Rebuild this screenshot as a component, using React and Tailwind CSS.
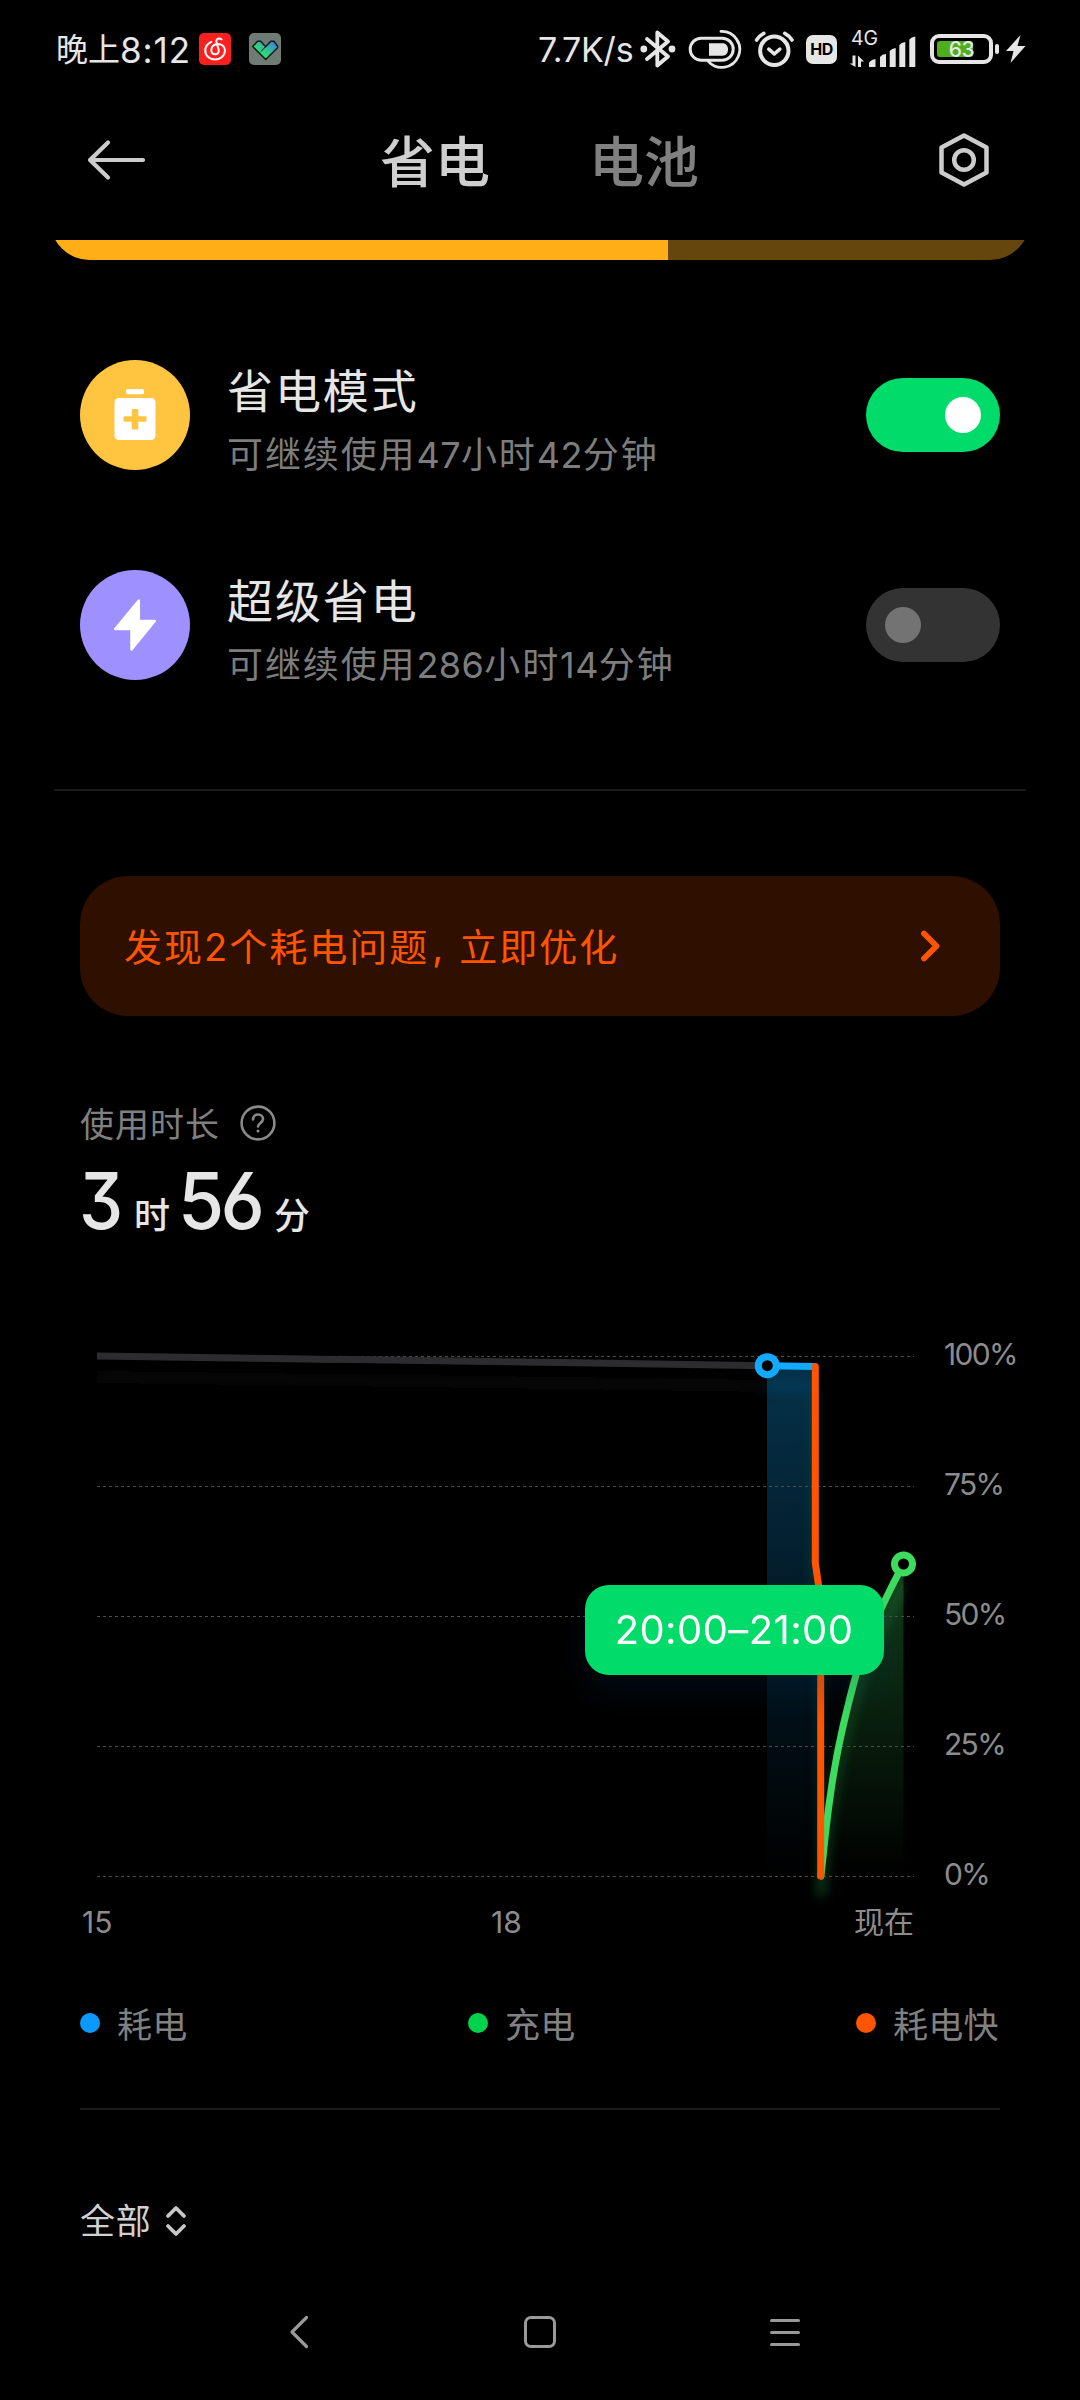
import React from "react";

const LATIN_CJK = "font-['Inter','Noto_Sans_CJK_SC',sans-serif]";

function StatusBar() {
  return (
    <div className="flex h-[100px] shrink-0 items-center pl-[56px] text-[#e6e6e6]">
      <div className="flex h-[34px] w-[143px] items-center whitespace-nowrap leading-none">
        <span className="text-[32px] leading-none">晚上</span>
        <span className="text-[35px] leading-none tracking-[0.9px]">8:12</span>
      </div>
      <svg className="mt-[-2px] h-8 w-8" viewBox="0 0 32 32" fill="none">
        <rect width="32" height="32" rx="5" fill="#fb2020" />
        <path
          d="M12.3 8.8C8.5 10.5 6.3 14 6.3 17.5 6.3 23 10.8 26.6 16 26.6S26 22.8 26 17.3C26 13.5 22.8 11 18.8 11 15 11 12.3 13.8 12.3 17c0 2.5 1.6 4.3 3.9 4.3s4-1.9 3.5-4.6L17.4 8.8C17 6.8 18.5 5.4 20.2 5.4c1 0 1.8.4 2.4 1"
          stroke="#fff"
          strokeWidth="2"
          strokeLinecap="round"
        />
      </svg>
      <svg className="ml-[18px] mt-[-2px] h-8 w-8" viewBox="0 0 32 32">
        <defs>
          <linearGradient id="tick" x1="0" y1="1" x2="1" y2="0">
            <stop offset="0.3" stopColor="#2fe36b" />
            <stop offset="0.6" stopColor="#35b9a0" />
            <stop offset="0.9" stopColor="#3f7fe0" />
          </linearGradient>
        </defs>
        <rect width="32" height="32" rx="5" fill="#6f7c76" />
        <path
          d="M3.6 13.5 8.6 8.3h3l5 5.4 5.2-5.4h3l3.8 4.6v1.8L16.7 26.5Z"
          fill="url(#tick)"
          stroke="#101c18"
          strokeWidth="1.5"
          strokeLinejoin="round"
        />
        <path d="M12 18.5 16.6 13.7" stroke="#101c18" strokeWidth="1" />
      </svg>

      <span className="ml-[257px] w-[102px] whitespace-nowrap text-[34px] leading-none tracking-[-0.2px]">
        7.7K/s
      </span>

      {/* bluetooth */}
      <svg className="mt-[-2px] h-10 w-9" viewBox="0 0 36 40" fill="none" stroke="#e6e6e6">
        <path
          d="M7 10 28 27.5 17.3 36.5V3.5L28 12.5 7 30"
          strokeWidth="3.8"
          strokeLinejoin="round"
          strokeLinecap="round"
        />
        <circle cx="3.8" cy="20" r="3.4" fill="#e6e6e6" stroke="none" />
        <circle cx="32" cy="20" r="3.4" fill="#e6e6e6" stroke="none" />
      </svg>

      {/* capsule with orbit arc */}
      <svg className="ml-[12px] mt-[-2px] h-10 w-[54px]" viewBox="0 0 54 40" fill="none" stroke="#e6e6e6">
        <rect x="2.2" y="9.2" width="43" height="22" rx="11" strokeWidth="3" />
        <path d="M21 14.3h13.5c3.5 0 5.5 2.7 5.5 6.2s-2 6.2-5.5 6.2H21Z" fill="#e6e6e6" stroke="none" />
        <path d="M33 2.4a18 18 0 1 1-12.5 30.2" strokeWidth="2.8" strokeLinecap="round" />
      </svg>

      {/* alarm */}
      <svg className="ml-[12px] mt-[-2px] h-10 w-10" viewBox="0 0 40 40" fill="none" stroke="#e6e6e6">
        <circle cx="20.3" cy="21.8" r="14.2" strokeWidth="4" />
        <path d="M14.8 20.2 20.3 25l5.5-4.8" strokeWidth="3.6" strokeLinecap="round" strokeLinejoin="round" />
        <path d="M2.6 11A20 20 0 0 1 9.8 4.4M38 11A20 20 0 0 0 30.8 4.4" strokeWidth="3.6" strokeLinecap="round" />
      </svg>

      <div className="ml-[12px] mt-[-2px] flex h-[29px] w-[31px] items-center justify-center rounded-[7px] bg-[#e6e6e6] text-[16px] font-bold leading-none tracking-[-0.4px] text-black">
        HD
      </div>

      {/* signal */}
      <div className="ml-[12px] mt-[-4px] flex h-[36px] w-[68px] flex-col">
        <span className="h-[16px] pl-[2px] text-[19.5px] leading-[17px]">4G</span>
        <svg className="mt-[-13px] h-9 w-[68px] shrink-0" viewBox="0 0 68 36" fill="#e6e6e6">
          <path d="M0.5 30.5h3V22.5h3V34ZM9 34V22.5l6 6h-3V34Z" />
          <path d="M20 34v-3.5q0-3 6.5-4.5V34ZM31 34V24q2-2.8 6-3V34ZM40.7 34V18q2-2.5 6-3V34ZM50.3 34V12q2-2.5 6-3V34ZM60.3 34V6.5q2-2.5 6-3V34Z" />
        </svg>
      </div>

      {/* battery */}
      <div className="relative ml-[13px] mt-[-2px] flex h-[30px] w-[63px] items-center rounded-[9px] border-[4px] border-[#e6e6e6] pl-[3px]">
        <div className="h-4 w-9 rounded-[3px] bg-[#4fae1b]" />
        <span className="absolute inset-0 flex items-center justify-center text-[21px] font-medium leading-none tracking-[-0.5px]">
          63
        </span>
      </div>
      <div className="ml-[2px] mt-[-2px] h-[10px] w-[4px] rounded-full bg-[#e6e6e6]" />
      <svg className="ml-[7px] mt-[-2px] h-[30px] w-5" viewBox="0 0 20 30" fill="#e6e6e6">
        <path d="M14.5 1 0 17h7.5L4.5 29 19.5 12h-8Z" />
      </svg>
    </div>
  );
}

function Header() {
  return (
    <div className="flex h-[120px] shrink-0 items-center pl-[86px]">
      <svg className="h-11 w-[60px]" viewBox="0 0 60 44" fill="none" stroke="#ccc" strokeWidth="4.2" strokeLinecap="round" strokeLinejoin="round">
        <path d="M22 4.5 4 22l18 17.5M4 22h53" />
      </svg>
      <span className="ml-[234px] mt-[5px] w-[209px] text-[55px] font-medium leading-none text-[#cfcfcf]">省电</span>
      <span className="mt-[5px] w-[348px] text-[55px] font-medium leading-none text-[#808080]">电池</span>
      <svg className="h-14 w-[54px]" viewBox="0 0 54 56" fill="none" stroke="#ccc" strokeWidth="4.5" strokeLinejoin="round">
        <path d="M27 3.5 49.5 15.5v25L27 52.5 4.5 40.5v-25Z" />
        <circle cx="27" cy="28" r="9.8" />
      </svg>
    </div>
  );
}

function ModeRow({ color, icon, title, hours, minutes, on }) {
  return (
    <div className="flex h-[110px] items-center">
      <div className={`flex h-[110px] w-[110px] items-center justify-center rounded-full ${color}`}>{icon}</div>
      <div className="flex h-[110px] w-[639px] flex-col pl-[37px] pt-[8px]">
        <div className="text-[46px] leading-none tracking-[1.9px] text-[#e6e6e6]">{title}</div>
        <div className="mt-[23px] whitespace-nowrap text-[36px] leading-none tracking-[1.9px] text-[#7d7d7d]">
          可继续使用<span className="tracking-[0.4px]">{hours}</span>小时
          <span className="tracking-[0.4px]">{minutes}</span>分钟
        </div>
      </div>
      <div
        className={
          on
            ? "ml-auto flex h-[74px] w-[134px] items-center justify-end rounded-full bg-[#00db69] px-[19px]"
            : "ml-auto flex h-[74px] w-[134px] items-center rounded-full bg-[#333] px-[19px]"
        }
      >
        <div className={on ? "h-9 w-9 rounded-full bg-white" : "h-9 w-9 rounded-full bg-[#737373]"} />
      </div>
    </div>
  );
}

const GREEN_CURVE = "M820.9 1876C824 1850 825 1834 829 1805C834 1765 844 1718 856 1675C866 1640 884 1600 903.5 1564";

function Chart() {
  return (
    <div className="relative flex">
      <svg className="h-[570px] w-[865px] shrink-0" viewBox="80 1335 865 570" fill="none">
        <defs>
          <linearGradient id="blueFill" x1="0" y1="0" x2="0" y2="1">
            <stop offset="0" stopColor="#12aaff" stopOpacity="0.29" />
            <stop offset="1" stopColor="#12aaff" stopOpacity="0" />
          </linearGradient>
          <linearGradient id="greenFill" x1="0" y1="1564" x2="0" y2="1876" gradientUnits="userSpaceOnUse">
            <stop offset="0" stopColor="#3ddc61" stopOpacity="0.28" />
            <stop offset="1" stopColor="#3ddc61" stopOpacity="0" />
          </linearGradient>
          <filter id="soft" x="-200" y="1200" width="1400" height="900" filterUnits="userSpaceOnUse">
            <feGaussianBlur stdDeviation="6" />
          </filter>
        </defs>
        <path d="M767 1366H815.3V1563L820.7 1600V1876H767Z" fill="url(#blueFill)" />
        <path d={`${GREEN_CURVE}V1876Z`} fill="url(#greenFill)" />
        <g filter="url(#soft)" strokeWidth="8">
          <path d="M97 1377 560 1383 767 1386" stroke="#2c2c2e" strokeWidth="12" opacity="0.15" />
          <path d="M767 1386H812" stroke="#12aaff" opacity="0.12" />
          <path d="M815 1390V1583L821 1620V1896" stroke="#1fa060" opacity="0.18" />
          <path d={GREEN_CURVE} transform="translate(0 20)" stroke="#3ddc61" opacity="0.2" />
        </g>
        <g stroke="#4c4c4c" strokeWidth="1" strokeDasharray="3 3">
          <path d="M97 1356.5H914M97 1486.5H914M97 1616.5H914M97 1746.5H914M97 1876.5H914" />
        </g>
        <path d="M97 1356 560 1362.5 767 1365.7" stroke="#2c2c2e" strokeWidth="7" />
        <path d={GREEN_CURVE} stroke="#3ddc61" strokeWidth="7" strokeLinecap="round" />
        <path d="M767 1365.7 815.3 1366.5" stroke="#12aaff" strokeWidth="7" />
        <path d="M815.3 1366.5V1563L820.7 1600V1876" stroke="#ff5500" strokeWidth="7" strokeLinecap="round" strokeLinejoin="round" />
        <circle cx="767.3" cy="1365.7" r="9" fill="#000" stroke="#12aaff" strokeWidth="7" />
        <circle cx="903.5" cy="1564" r="9" fill="#000" stroke="#3ddc61" strokeWidth="7" />
      </svg>
      <div className="-ml-px flex flex-col gap-[100px] pt-1 text-[30px] leading-none tracking-[-1.7px] text-[#8c8c8c]">
        <span>100%</span>
        <span>75%</span>
        <span>50%</span>
        <span>25%</span>
        <span>0%</span>
      </div>
      <div className="absolute left-[505px] top-[250px] flex h-[90px] w-[299px] items-center justify-center rounded-[24px] bg-[#00db69] pb-px pr-px text-[40px] leading-none tracking-[0.4px] text-white shadow-[0_20px_30px_rgba(0,50,90,0.2)]">
        20:00–21:00
      </div>
    </div>
  );
}

function LegendItem({ dot, label }) {
  return (
    <div className="flex w-[388px] shrink-0 items-center whitespace-nowrap">
      <div className={`h-5 w-5 rounded-full ${dot}`} />
      <span className="ml-[17px] mt-[4px] text-[35px] leading-none tracking-[0.2px] text-[#808080]">{label}</span>
    </div>
  );
}

export default function App() {
  return (
    <div className={`flex h-[2400px] w-[1080px] flex-col overflow-hidden bg-black ${LATIN_CJK}`}>
      <StatusBar />
      <Header />

      {/* charge bar, scrolled partly under the header */}
      <div className="mx-[50px] mt-[20px] flex h-5 shrink-0 items-end overflow-hidden">
        <div className="flex h-20 w-full shrink-0 overflow-hidden rounded-[40px] bg-[#65460c]">
          <div className="w-[618px] bg-[#ffae17]" />
        </div>
      </div>

      <div className="mt-[100px] flex shrink-0 flex-col gap-[100px] px-[80px]">
        <ModeRow
          on
          color="bg-[#ffc540]"
          title="省电模式"
          hours="47"
          minutes="42"
          icon={
            <svg className="h-14 w-12" viewBox="0 0 48 56" fill="#fff">
              <rect x="15" y="2" width="18" height="5.3" rx="1.8" />
              <path
                fillRule="evenodd"
                d="M8 11h32a4.5 4.5 0 0 1 4.5 4.5v33a4.5 4.5 0 0 1-4.5 4.5h-32a4.5 4.5 0 0 1-4.5-4.5v-33a4.5 4.5 0 0 1 4.5-4.5ZM21.7 22a1 1 0 0 0-1 1v6.3h-7.2a1 1 0 0 0-1 1v3.4a1 1 0 0 0 1 1h7.2v6.8a1 1 0 0 0 1 1h4.6a1 1 0 0 0 1-1v-6.8h7.2a1 1 0 0 0 1-1v-3.4a1 1 0 0 0-1-1h-7.2v-6.3a1 1 0 0 0-1-1Z"
              />
            </svg>
          }
        />
        <ModeRow
          color="bg-[#9e91ff]"
          title="超级省电"
          hours="286"
          minutes="14"
          icon={
            <svg className="h-14 w-12" viewBox="0 0 48 56" fill="#fff" stroke="#fff" strokeWidth="2.5" strokeLinejoin="round">
              <path d="M27.8 3.5V24H43.7L20.5 52.5V32H4.3Z" />
            </svg>
          }
        />
      </div>

      <div className="mx-[54px] mt-[109px] h-[2px] shrink-0 bg-[#1a1a1a]" />

      <div className="mx-[80px] mt-[85px] flex h-[140px] shrink-0 items-center rounded-[48px] bg-[#2e0f00] pl-[44px] pr-[58px] text-[38px] leading-none text-[#ff5500]">
        <span className="mt-[2px] tracking-[2px]">发现2个耗电问题</span>
        <span className="mt-[2px] w-[30px] pl-[3px]">,</span>
        <span className="mt-[2px] tracking-[2px]">立即优化</span>
        <svg className="ml-auto h-9 w-[24px]" viewBox="0 0 24 36" fill="none" stroke="#ff5500" strokeWidth="5.8" strokeLinecap="round" strokeLinejoin="round">
          <path d="M6 5.5 18.5 18 6 30.5" />
        </svg>
      </div>

      <div className="mt-[86px] flex h-[42px] shrink-0 items-center px-[80px] leading-none">
        <span className="mt-[3px] w-[159px] text-[34px] leading-none tracking-[1px] text-[#808080]">使用时长</span>
        <svg className="h-[38px] w-[38px]" viewBox="0 0 38 38" fill="none" stroke="#8a8a8a" strokeWidth="2.6" strokeLinecap="round">
          <circle cx="19" cy="19" r="16.4" />
          <path d="M14 15.5c0-3 2.2-5 5-5s5 1.8 5 4.5c0 3.8-5 4-5 7.5" />
          <circle cx="19" cy="27" r="0.7" fill="#8a8a8a" stroke="#8a8a8a" strokeWidth="1.6" />
        </svg>
      </div>
      <div className="mt-[18px] flex h-[78px] shrink-0 items-baseline pl-[79px] font-medium leading-none text-[#e6e6e6] [font-feature-settings:'cv09','cv03']">
        <span className="w-[55px] origin-left scale-x-[0.9] text-[78px] leading-none tracking-[-2px]">3</span>
        <span className="w-[44px] text-[36px] leading-none">时</span>
        <span className="w-[96px] origin-left scale-x-[0.96] text-[78px] leading-none tracking-[-4px]">56</span>
        <span className="text-[36px] leading-none">分</span>
      </div>

      <div className="mt-[95px] shrink-0 pl-[80px]">
        <Chart />
      </div>

      <div className="mt-[2px] flex h-[30px] shrink-0 items-center pl-[82px] text-[30px] leading-none text-[#8c8c8c]">
        <span className="w-[409px]">15</span>
        <span className="w-[363px]">18</span>
        <span className="leading-none">现在</span>
      </div>

      <div className="mt-[67px] flex h-[38px] shrink-0 items-center pl-[80px]">
        <LegendItem dot="bg-[#0c99ff]" label="耗电" />
        <LegendItem dot="bg-[#00d24b]" label="充电" />
        <LegendItem dot="bg-[#ff5500]" label="耗电快" />
      </div>

      <div className="mx-[80px] mt-[66px] h-[2px] shrink-0 bg-[#1a1a1a]" />

      <div className="mt-[92px] flex h-[38px] shrink-0 items-center pl-[80px]">
        <span className="w-[84px] text-[35px] leading-none tracking-[0.8px] text-[#d0d0d0]">全部</span>
        <svg className="h-8 w-6" viewBox="0 0 24 32" fill="none" stroke="#c8c8c8" strokeWidth="3.8" strokeLinecap="round" strokeLinejoin="round">
          <path d="M4 11 12 3l8 8M4 21l8 8 8-8" />
        </svg>
      </div>

      <div className="mt-[70px] flex h-[44px] shrink-0 items-center pl-[286px]">
        <svg className="h-10 w-7" viewBox="0 0 28 40" fill="none" stroke="#999" strokeWidth="3.2" strokeLinecap="round" strokeLinejoin="round">
          <path d="M20.5 5.5 6 20l14.5 14.5" />
        </svg>
        <div className="ml-[210px] h-8 w-8 rounded-[7px] border-[3px] border-[#999]" />
        <div className="ml-[214px] flex w-[30px] flex-col gap-[9px]">
          <div className="h-[3px] rounded-full bg-[#999]" />
          <div className="h-[3px] rounded-full bg-[#999]" />
          <div className="h-[3px] rounded-full bg-[#999]" />
        </div>
      </div>
    </div>
  );
}
